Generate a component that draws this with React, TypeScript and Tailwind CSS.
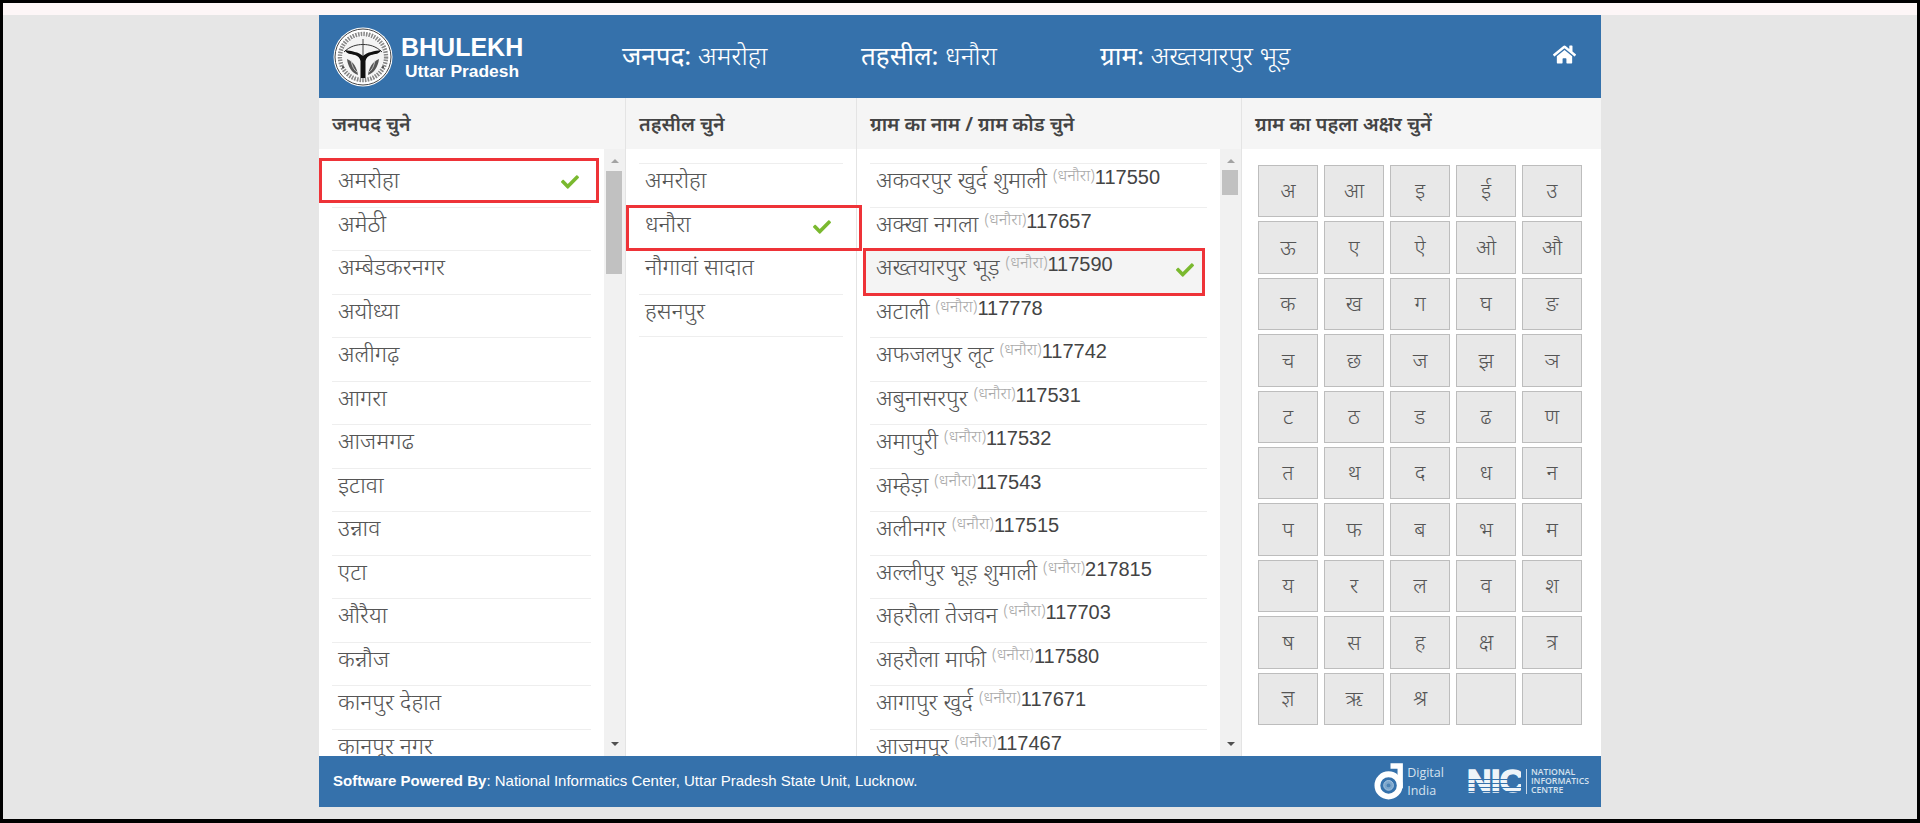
import { FaCheck, FaHome } from "react-icons/fa";

const deva = "font-['Noto_Sans','Noto_Sans_Devanagari','Liberation_Sans',sans-serif]";

const districts = ["अमरोहा", "अमेठी", "अम्बेडकरनगर", "अयोध्या", "अलीगढ़", "आगरा", "आजमगढ", "इटावा", "उन्नाव", "एटा", "औरैया", "कन्नौज", "कानपुर देहात", "कानपूर नगर"];
const tehsils = ["अमरोहा", "धनौरा", "नौगावां सादात", "हसनपुर"];
const villages = [
  ["अकवरपुर खुर्द शुमाली", "117550"],
  ["अक्खा नगला", "117657"],
  ["अख्तयारपुर भूड़", "117590"],
  ["अटाली", "117778"],
  ["अफजलपुर लूट", "117742"],
  ["अबुनासरपुर", "117531"],
  ["अमापुरी", "117532"],
  ["अम्हेड़ा", "117543"],
  ["अलीनगर", "117515"],
  ["अल्लीपुर भूड़ शुमाली", "217815"],
  ["अहरौला तेजवन", "117703"],
  ["अहरौला माफी", "117580"],
  ["आगापुर खुर्द", "117671"],
  ["आजमपूर", "117467"],
];
const letters = ["अ", "आ", "इ", "ई", "उ", "ऊ", "ए", "ऐ", "ओ", "औ", "क", "ख", "ग", "घ", "ङ", "च", "छ", "ज", "झ", "ञ", "ट", "ठ", "ड", "ढ", "ण", "त", "थ", "द", "ध", "न", "प", "फ", "ब", "भ", "म", "य", "र", "ल", "व", "श", "ष", "स", "ह", "क्ष", "त्र", "ज्ञ", "ऋ", "श्र", "", ""];

const rowText = "relative z-[2] h-full pl-[6px] text-[23px] leading-[30px] font-light text-[#555] whitespace-nowrap border-t";

function Emblem() {
  return (
    <svg viewBox="0 0 60 60" className="w-[60px] h-[60px] shrink-0">
      <circle cx="30" cy="30" r="29.5" fill="#fff" />
      <circle cx="30" cy="30" r="28" fill="none" stroke="#444" strokeWidth="1" />
      <circle cx="30" cy="30" r="23" fill="none" stroke="#555" strokeWidth="4.5" strokeDasharray="1.6 1.1" opacity="0.7" />
      <circle cx="30" cy="30" r="20.5" fill="#f4f4f4" />
      <path d="M11 25 C17 19 24 17.5 30 17.5 C36 17.5 43 19 49 25" fill="none" stroke="#333" strokeWidth="1" />
      <path d="M30 12 L30 29" stroke="#444" strokeWidth="1" />
      <path d="M12 23 C18 24 26 25 30 29 C34 25 42 24 48 23 C47 27 42 27 38 28 C35 29 33 31 32.5 34 L32.5 51 L27.5 51 L27.5 34 C27 31 25 29 22 28 C18 27 13 27 12 23 Z" fill="#111" />
      <path d="M14 32 C15 40 19 46 25 48 C24 41 21 35 14 32 Z M46 32 C45 40 41 46 35 48 C36 41 39 35 46 32 Z" fill="#555" />
      <path d="M18 33 C19 39 21 43 24 45 M42 33 C41 39 39 43 36 45" fill="none" stroke="#ddd" strokeWidth="0.8" />
      <circle cx="10" cy="40" r="1" fill="#333" />
      <circle cx="50" cy="40" r="1" fill="#333" />
    </svg>
  );
}

function DigitalIndia() {
  return (
    <div className="flex items-center">
      <svg viewBox="0 0 34 38" className="w-[33px] h-[37px] shrink-0">
        <path d="M17 3 H27 V26" fill="none" stroke="#fff" strokeWidth="5.5" />
        <circle cx="15" cy="23" r="11.5" fill="none" stroke="#fff" strokeWidth="6" />
        <circle cx="15" cy="23" r="5" fill="#7da6cb" stroke="#a9c6e0" strokeWidth="1" />
        <circle cx="15" cy="23" r="2" fill="#4c82b4" />
      </svg>
      <div className="text-[12.5px] leading-[18px] text-[#d5e2ee] font-['Open_Sans',sans-serif]">
        <div>Digital</div>
        <div>India</div>
      </div>
    </div>
  );
}

function NicLogo() {
  return (
    <div className="flex items-center ml-[23px]">
      <div className="relative h-[25px] w-[54px] overflow-hidden font-['Liberation_Sans',sans-serif] font-bold text-[32px] leading-[25px] text-[#eef4f9] [-webkit-text-stroke:1.4px_#eef4f9]">
        <span className="inline-block origin-left scale-x-[1.06] tracking-[-0.5px]">NIC</span>
        <div className="absolute left-0 right-0 top-[10px] h-[1px] bg-[#3571ab]" />
        <div className="absolute left-0 right-0 top-[14px] h-[1px] bg-[#3571ab]" />
        <div className="absolute left-0 right-0 top-[18px] h-[1px] bg-[#3571ab]" />
        <div className="absolute left-0 right-0 top-[22px] h-[1px] bg-[#3571ab]" />
      </div>
      <div className="w-[1px] h-[25px] bg-[#c7d8e9] ml-[5px] mr-[4px]" />
      <div className="text-[8.7px] leading-[9px] text-[#d5e2ee] font-['Open_Sans',sans-serif] font-semibold">
        <div>NATIONAL</div>
        <div>INFORMATICS</div>
        <div>CENTRE</div>
      </div>
    </div>
  );
}

function Scrollbar({ thumbTop, thumbHeight }: { thumbTop: string; thumbHeight: string }) {
  return (
    <div className="w-[21px] shrink-0 bg-[#f1f1f1] flex flex-col items-center relative">
      <div className="mt-[10px] w-0 h-0 border-x-[4px] border-x-transparent border-b-[4px] border-b-[#a3a3a3]" />
      <div className={`absolute left-[2px] right-[3px] bg-[#c1c1c1] ${thumbTop} ${thumbHeight}`} />
      <div className="mt-auto mb-[10px] w-0 h-0 border-x-[4px] border-x-transparent border-t-[4px] border-t-[#505050]" />
    </div>
  );
}

function Selected({ className }: { className: string }) {
  return <div className={`absolute z-[1] border-[3px] border-[#ee3338] pointer-events-none ${className}`} />;
}

function Tick({ className }: { className: string }) {
  return <FaCheck className={`absolute z-[3] text-[#7ab92f] text-[18px] ${className}`} />;
}

function ColHead({ title }: { title: string }) {
  return (
    <div className="h-[51px] shrink-0 flex items-center bg-[#f5f5f5] font-semibold text-[#444] text-[19.5px] pl-[13px]">
      {title}
    </div>
  );
}

export default function App() {
  return (
    <div className={`h-[823px] border-x-[3px] border-t-[3px] border-b-[4px] border-black bg-[#e6e6e6] overflow-hidden ${deva}`}>
      <div className="h-[12px] bg-[#fdf6f7]" />
      <div className="w-[1282px] ml-[316px] flex flex-col h-[792px]">
        <header className="h-[83px] shrink-0 bg-[#3571ab] flex items-center text-white relative">
          <div className="flex items-center pl-[14px] w-[303px] shrink-0">
            <Emblem />
            <div className="ml-[8px] font-['Liberation_Sans',sans-serif] font-bold">
              <div className="text-[25px] leading-[28px]">BHULEKH</div>
              <div className="text-[17.4px] leading-[20px] ml-[4px]">Uttar Pradesh</div>
            </div>
          </div>
          <div className="w-[239px] text-[26px] font-light mt-[-3px]"><b>जनपद:</b> अमरोहा</div>
          <div className="w-[239px] text-[26px] font-light mt-[-3px]"><b>तहसील:</b> धनौरा</div>
          <div className="text-[26px] font-light mt-[-3px]"><b>ग्राम:</b> अख्तयारपुर भूड़</div>
          <FaHome className="absolute right-[25px] top-[28px] text-[23px]" />
        </header>

        <div className="flex h-[658px] min-h-0 bg-white overflow-hidden">
          <div className="w-[307px] shrink-0 flex flex-col border-r border-[#e4e4e4]">
            <ColHead title="जनपद चुने" />
            <div className="flex flex-1 min-h-0">
              <div className="flex-1 pt-[14px] overflow-hidden">
                {districts.map((d, i) => (
                  <div key={d} className="relative h-[43.5px] px-[13px]">
                    {i === 0 && <Selected className="left-0 right-[5px] top-[-5px] h-[45px]" />}
                    <div className={`${rowText} ${i === 0 ? "border-transparent" : "border-[#eeeeee]"}`}>{d}</div>
                    {i === 0 && <Tick className="right-[25px] top-[10px]" />}
                  </div>
                ))}
              </div>
              <Scrollbar thumbTop="top-[22px]" thumbHeight="h-[103px]" />
            </div>
          </div>

          <div className="w-[231px] shrink-0 flex flex-col border-r border-[#e4e4e4]">
            <ColHead title="तहसील चुने" />
            <div className="flex-1 pt-[14px]">
              {tehsils.map((d, i) => (
                <div key={d} className="relative h-[43.5px] px-[13px]">
                  {i === 1 && <Selected className="left-0 right-[-6px] top-[-2px] h-[46px] z-[4]" />}
                  <div className={`${rowText} ${i === 1 ? "border-transparent" : "border-[#eeeeee]"} ${i === 3 ? "border-b" : ""}`}>{d}</div>
                  {i === 1 && <Tick className="right-[25px] top-[11px]" />}
                </div>
              ))}
            </div>
          </div>

          <div className="w-[385px] shrink-0 flex flex-col border-r border-[#e4e4e4]">
            <ColHead title="ग्राम का नाम / ग्राम कोड चुने" />
            <div className="flex flex-1 min-h-0">
              <div className="flex-1 pt-[14px] overflow-hidden">
                {villages.map(([name, code], i) => (
                  <div key={code} className="relative h-[43.5px] px-[13px]">
                    {i === 2 && <Selected className="left-[6px] right-[15px] top-[-2px] h-[48px] bg-[#f4f4f4]" />}
                    <div className={`${rowText} ${i === 2 || i === 3 ? "border-transparent" : "border-[#eeeeee]"}`}>
                      {name} <span className="text-[16.5px] text-[#aaa] relative top-[-7px]">(धनौरा)</span>
                      <span className="font-['Liberation_Sans',sans-serif] font-normal text-[20px] text-[#444] relative top-[-4px]">{code}</span>
                    </div>
                    {i === 2 && <Tick className="right-[26px] top-[11px]" />}
                  </div>
                ))}
              </div>
              <Scrollbar thumbTop="top-[21px]" thumbHeight="h-[25px]" />
            </div>
          </div>

          <div className="flex-1 flex flex-col">
            <ColHead title="ग्राम का पहला अक्षर चुनें" />
            <div className="pt-[16px] pl-[16px]">
              <div className="grid grid-cols-[repeat(5,60px)] grid-rows-[repeat(10,1fr)] gap-x-[6px] gap-y-[4px] h-[560px]">
                {letters.map((l, i) => (
                  <div key={i} className="bg-[#e8e8e8] border border-[#bdbdbd] flex items-center justify-center text-[21px] font-light text-[#555]">
                    {l}
                  </div>
                ))}
              </div>
            </div>
          </div>
        </div>

        <footer className="h-[51px] shrink-0 bg-[#3571ab] flex items-center justify-between pl-[14px] pr-[12px] text-white text-[15px] font-['Liberation_Sans',sans-serif]">
          <div><b>Software Powered By</b>: National Informatics Center, Uttar Pradesh State Unit, Lucknow.</div>
          <div className="flex items-center">
            <DigitalIndia />
            <NicLogo />
          </div>
        </footer>
      </div>
    </div>
  );
}
